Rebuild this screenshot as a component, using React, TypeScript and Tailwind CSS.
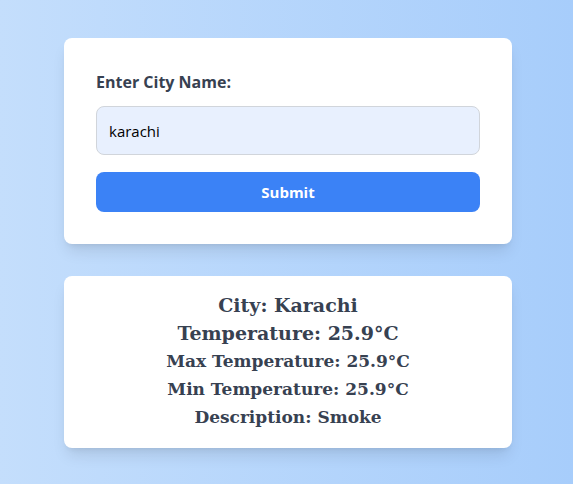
import React, { useState } from 'react';

export default function App() {
  const [city, setCity] = useState('karachi');

  return (
    <div className="min-h-screen w-full bg-gradient-to-r from-[#c4defc] to-[#a7cdfb] flex flex-col items-center justify-center gap-8 pl-[3px] pt-[2px]">
      {/* search card */}
      <form
        className="w-[448px] rounded-lg bg-white px-8 pt-8 pb-8 shadow-lg"
        style={{ fontFamily: '"Segoe UI", "Open Sans", "Noto Sans", sans-serif' }}
        onSubmit={(e) => e.preventDefault()}
      >
        <label className="mb-3 block text-base leading-6 font-bold text-[#374151]">
          Enter City Name:
        </label>
        <input
          value={city}
          onChange={(e) => setCity(e.target.value)}
          className="block h-[49px] w-full rounded-lg border border-[#d1d5db] bg-[#e8f0fe] px-3 text-[15px] text-black outline-none"
        />
        <button
          type="submit"
          className="mt-[17px] h-10 w-full rounded-lg bg-[#3b82f6] text-[15px] font-bold text-white"
        >
          Submit
        </button>
      </form>

      {/* result card */}
      <div
        className="w-[448px] rounded-lg bg-white pt-[15px] pb-[17px] text-center font-bold text-[#374151] shadow-lg"
        style={{ fontFamily: 'Georgia, "DejaVu Serif", serif' }}
      >
        <p className="text-[19px] leading-7">City: Karachi</p>
        <p className="text-[19px] leading-7">Temperature: 25.9°C</p>
        <p className="text-[17px] leading-7">Max Temperature: 25.9°C</p>
        <p className="text-[17px] leading-7">Min Temperature: 25.9°C</p>
        <p className="text-[17px] leading-7">Description: Smoke</p>
      </div>
    </div>
  );
}
